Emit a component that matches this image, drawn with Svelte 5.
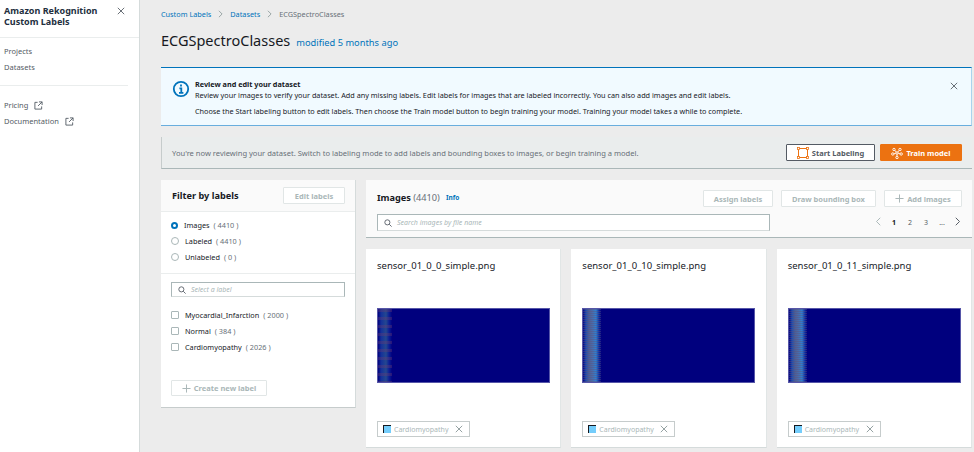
<script>
  const labels = [
    { name: 'Myocardial_Infarction', count: 2000 },
    { name: 'Normal', count: 384 },
    { name: 'Cardiomyopathy', count: 2026 }
  ];
  const filters = [
    { name: 'Images', count: 4410, on: true },
    { name: 'Labeled', count: 4410 },
    { name: 'Unlabeled', count: 0 }
  ];
  const cards = [
    { file: 'sensor_01_0_0_simple.png', hot: 'a' },
    { file: 'sensor_01_0_10_simple.png', hot: 'b' },
    { file: 'sensor_01_0_11_simple.png', hot: 'b' }
  ];
</script>

<div class="page">
  <aside class="nav">
    <div class="nav-head">
      <h2>Amazon Rekognition Custom Labels</h2>
      <svg class="x" viewBox="0 0 10 10"><path d="M1 1l8 8M9 1l-8 8" /></svg>
    </div>
    <ul class="nav-main">
      <li>Projects</li>
      <li>Datasets</li>
    </ul>
    <hr />
    <ul class="nav-links">
      <li>Pricing {@render ext()}</li>
      <li>Documentation {@render ext()}</li>
    </ul>
  </aside>

  <main>
    <div class="crumbs">
      <span class="link">Custom Labels</span>
      {@render chev()}
      <span class="link">Datasets</span>
      {@render chev()}
      <span>ECGSpectroClasses</span>
    </div>
    <div class="title">
      <h1>ECGSpectroClasses</h1>
      <span class="link">modified 5 months ago</span>
    </div>

    <div class="flash">
      <svg class="info" viewBox="0 0 18 18">
        <circle cx="9" cy="9" r="7.2" />
        <path d="M9 4.600v2M7.400 8.400H9.300v4.300M7 12.900h4.400" />
      </svg>
      <div class="flash-text">
        <b>Review and edit your dataset</b>
        <p>Review your images to verify your dataset. Add any missing labels. Edit labels for images that are labeled incorrectly. You can also add images and edit labels.</p>
        <p class="second">Choose the Start labeling button to edit labels. Then choose the Train model button to begin training your model. Training your model takes a while to complete.</p>
      </div>
      <svg class="x flash-x" viewBox="0 0 10 10"><path d="M1 1l8 8M9 1l-8 8" /></svg>
    </div>

    <div class="review">
      <span>You're now reviewing your dataset. Switch to labeling mode to add labels and bounding boxes to images, or begin training a model.</span>
      <div class="review-btns">
        <button class="btn-outline">
          <svg viewBox="0 0 12 12" width="12" height="12">
            <rect x="1.500" y="1.500" width="9" height="9" fill="none" stroke="#ec7211" />
            <g fill="#fff" stroke="#ec7211" stroke-width=".8">
              <rect x=".5" y=".5" width="2" height="2" /><rect x="9.500" y=".5" width="2" height="2" />
              <rect x=".5" y="9.500" width="2" height="2" /><rect x="9.500" y="9.500" width="2" height="2" />
            </g>
          </svg>
          Start Labeling
        </button>
        <button class="btn-primary">
          <svg viewBox="0 0 12 12" width="12" height="12" fill="none" stroke="#fff" stroke-width=".9">
            <circle cx="3" cy="2.500" r="1.200" /><circle cx="9" cy="2.500" r="1.200" />
            <circle cx="6" cy="6" r="1.200" /><circle cx="1.800" cy="7" r="1.200" />
            <circle cx="10.200" cy="7" r="1.200" /><circle cx="6" cy="10.500" r="1.200" />
            <path d="M4 3.400l1.200 1.700M8 3.400L6.800 5.100M3 6.800l1.800-.5M9 6.800l-1.800-.5M6 7.200v2.100" />
          </svg>
          Train model
        </button>
      </div>
    </div>

    <div class="columns">
      <section class="filter">
        <header>
          <h3>Filter by labels</h3>
          <button class="btn-off">Edit labels</button>
        </header>
        <div class="radios">
          {#each filters as f}
            <div class="row">
              <span class="radio" class:on={f.on}></span>
              <span>{f.name}</span><span class="count">( {f.count} )</span>
            </div>
          {/each}
        </div>
        <div class="label-box">
          <div class="search">
            {@render glass()}
            <em>Select a label</em>
          </div>
          <div class="checks">
            {#each labels as l}
              <div class="row">
                <span class="check"></span>
                <span>{l.name}</span><span class="count">( {l.count} )</span>
              </div>
            {/each}
          </div>
          <button class="btn-off create">
            <svg viewBox="0 0 10 10" width="9" height="9"><path d="M5 .5v9M.5 5h9" stroke="#aab7b8" fill="none" stroke-width="1.100" /></svg>
            Create new label
          </button>
        </div>
      </section>

      <section class="images">
        <div class="img-head">
          <div class="img-top">
            <h3>Images <span>(4410)</span></h3>
            <span class="link info-link">Info</span>
            <div class="img-btns">
              <button class="btn-off">Assign labels</button>
              <button class="btn-off">Draw bounding box</button>
              <button class="btn-off add">
                <svg viewBox="0 0 10 10" width="9" height="9"><path d="M5 .5v9M.5 5h9" stroke="#aab7b8" fill="none" stroke-width="1.100" /></svg>
                Add images
              </button>
            </div>
          </div>
          <div class="img-bottom">
            <div class="search wide">
              {@render glass()}
              <em>Search images by file name</em>
            </div>
            <div class="pager">
              <span><svg viewBox="0 0 8 12" width="6" height="9"><path d="M7 1L2 6l5 5" stroke="#aab7b8" fill="none" stroke-width="1.300" /></svg></span>
              <span class="cur">1</span><span>2</span><span>3</span><span>...</span>
              <span><svg viewBox="0 0 8 12" width="6" height="9"><path d="M1 1l5 5-5 5" stroke="#545b64" fill="none" stroke-width="1.300" /></svg></span>
            </div>
          </div>
        </div>

        <div class="grid">
          {#each cards as c}
            <article class="card">
              <div class="fname">{c.file}</div>
              <div class="spectro {c.hot}"></div>
              <div class="tag">
                <span class="swatch"></span>
                <span>Cardiomyopathy</span>
                <svg viewBox="0 0 10 10" width="8" height="8"><path d="M1 1l8 8M9 1l-8 8" stroke="#879596" fill="none" stroke-width="1.100" /></svg>
              </div>
            </article>
          {/each}
        </div>
      </section>
    </div>
  </main>
</div>

{#snippet ext()}
  <svg class="ext" viewBox="0 0 10 10"><path d="M4 1.500H1v7.500h7.500V6M5.500 1H9v3.500M9 1L4.500 5.500" /></svg>
{/snippet}

{#snippet chev()}
  <svg class="chev" viewBox="0 0 6 10"><path d="M1 1l4 4-4 4" /></svg>
{/snippet}

{#snippet glass()}
  <svg class="glass" viewBox="0 0 10 10"><circle cx="4.200" cy="4.200" r="3.200" /><path d="M6.600 6.600L9.500 9.500" /></svg>
{/snippet}

<style>
  :global(body) {
    margin: 0;
    background: #ececec;
    font-family: "Noto Sans", "Open Sans", sans-serif;
    color: #16191f;
    overflow: hidden;
  }

  .page {
    display: flex;
    width: 974px;
    height: 452px;
    overflow: hidden;
  }

  .nav {
    width: 140px;
    box-sizing: border-box;
    flex: none;
    background: #fff;
    border-right: 1px solid #d5dbdb;
    font-size: 7.500px;
    color: #545b64;
  }
  .nav-head {
    display: flex;
    justify-content: space-between;
    padding: 5px 14px 0 4px;
    height: 32px;
    border-bottom: 1px solid #eaeded;
  }
  .nav-head h2 {
    margin: 0;
    font-size: 9px;
    line-height: 11px;
    font-weight: 700;
    color: #232f3e;
    width: 110px;
  }
  .x {
    width: 8px;
    height: 8px;
    margin-top: 2px;
    fill: none;
    stroke: #545b64;
    stroke-width: 1.100;
  }
  .nav ul {
    list-style: none;
    margin: 0;
    padding: 0 4px;
  }
  .nav li {
    height: 16px;
    line-height: 16px;
    display: flex;
    align-items: center;
    gap: 6px;
  }
  .nav-main {
    padding-top: 5px !important;
  }
  .nav hr {
    border: 0;
    border-top: 1px solid #eaeded;
    margin: 10px 11px 0 0;
  }
  .nav-links {
    padding-top: 11px !important;
  }
  .ext {
    width: 9px;
    height: 9px;
    fill: none;
    stroke: #545b64;
    stroke-width: 1;
  }

  main {
    flex: 1;
    padding: 0 2px 0 21px;
    min-width: 0;
  }

  .link {
    color: #0073bb;
  }
  .crumbs {
    display: flex;
    align-items: center;
    gap: 7px;
    height: 27px;
    font-size: 7.300px;
    color: #687078;
  }
  .chev {
    width: 5px;
    height: 8px;
    fill: none;
    stroke: #879596;
    stroke-width: 1;
  }
  .title {
    display: flex;
    align-items: baseline;
    gap: 6px;
    height: 40px;
    font-size: 9.300px;
  }
  .title h1 {
    margin: 0;
    font-size: 14.500px;
    line-height: 26px;
    font-weight: 400;
  }

  .flash {
    display: flex;
    height: 59px;
    box-sizing: border-box;
    background: #f1faff;
    border-top: 1px solid #0073bb;
    border-bottom: 1px solid #69aede;
    border-right: 1px solid #a9d3ee;
    padding: 11px 10px 0 11px;
  }
  .info {
    width: 18px;
    height: 18px;
    flex: none;
    margin: 1px 0 0 0;
    fill: none;
    stroke: #0073bb;
    stroke-width: 1.800;
  }
  .flash-text {
    margin-left: 5px;
    flex: 1;
    font-size: 7.280px;
    line-height: 11px;
  }
  .flash-text b {
    display: block;
  }
  .flash-text p {
    margin: 0;
  }
  .flash-text .second {
    margin-top: 5px;
  }
  .flash-x {
    margin: 3px 3px 0 0;
  }

  .review {
    display: flex;
    align-items: center;
    justify-content: space-between;
    height: 31px;
    margin-top: 11px;
    padding: 0 10px 0 10px;
    background: #eaeded;
    border-left: 1px solid #c6cccc;
    border-bottom: 1px solid #aab7b8;
    font-size: 7.570px;
    color: #687078;
  }
  .review-btns {
    display: flex;
    gap: 5px;
  }
  button {
    font: inherit;
    font-weight: 700;
    font-size: 7.500px;
    display: inline-flex;
    align-items: center;
    justify-content: center;
    gap: 3px;
    padding: 0;
    border-radius: 1px;
  }
  .btn-outline {
    width: 89px;
    height: 17px;
    background: #fff;
    border: 1px solid #545b64;
    color: #545b64;
  }
  .btn-primary {
    width: 82px;
    height: 17px;
    background: #ec7211;
    border: 1px solid #ec7211;
    color: #fff;
  }
  .btn-off {
    background: #fff;
    border: 1px solid #e1e6e6;
    color: #aab7b8;
    height: 17px;
  }

  .columns {
    display: flex;
    gap: 10px;
    margin-top: 11px;
    align-items: flex-start;
  }

  .filter {
    width: 195px;
    box-sizing: border-box;
    flex: none;
    background: #fff;
    border-bottom: 1px solid #c6cccc;
    border-right: 1px solid #d5dbdb;
    font-size: 7.300px;
  }
  .filter header {
    display: flex;
    justify-content: space-between;
    align-items: center;
    height: 31px;
    padding: 0 10px 0 11px;
    background: #fafafa;
    border-bottom: 1px solid #eaeded;
  }
  h3 {
    margin: 0;
    font-size: 9.200px;
    font-weight: 700;
  }
  .filter header .btn-off {
    width: 62px;
  }
  .row {
    display: flex;
    align-items: center;
    height: 16px;
    gap: 0;
  }
  .count {
    margin-left: 4px;
    color: #687078;
  }
  .radios {
    padding: 5px 10px 0;
    box-sizing: border-box;
    border-bottom: 1px solid #eaeded;
    height: 62px;
  }
  .radio {
    width: 6px;
    height: 6px;
    border-radius: 50%;
    border: 1px solid #aab7b8;
    margin-right: 6px;
    background: #fff;
  }
  .radio.on {
    border: 2.500px solid #0073bb;
    width: 3px;
    height: 3px;
  }
  .label-box {
    padding: 8px 10px 11px;
  }
  .search {
    display: flex;
    align-items: center;
    gap: 5px;
    height: 15px;
    box-sizing: border-box;
    background: #fff;
    padding-left: 6px;
    border: 1px solid #aab7b8;
    border-bottom-color: #d5dbdb;
    font-size: 7px;
    color: #aab7b8;
  }
  .glass {
    width: 8px;
    height: 8px;
    flex: none;
    fill: none;
    stroke: #545b64;
    stroke-width: 1.100;
  }
  .checks {
    margin-top: 10px;
  }
  .check {
    width: 6px;
    height: 6px;
    border: 1px solid #aab7b8;
    border-radius: 1px;
    margin-right: 6px;
  }
  .create {
    width: 96px;
    height: 16px;
    margin-top: 25px;
  }

  .images {
    flex: 1;
    min-width: 0;
  }
  .img-head {
    background: #fafafa;
    border-bottom: 1px solid #aab7b8;
    height: 58px;
    padding: 0 6px 0 11px;
    box-sizing: border-box;
  }
  .img-top {
    display: flex;
    align-items: center;
    height: 34px;
  }
  .img-top h3 {
    font-size: 9.200px;
  }
  .img-top h3 span {
    font-weight: 400;
    color: #687078;
  }
  .info-link {
    font-size: 6.500px;
    font-weight: 700;
    margin-left: 6px;
  }
  .img-btns {
    margin-left: auto;
    margin-right: 4px;
    display: flex;
    gap: 8px;
    padding-top: 3px;
  }
  .img-btns button:nth-child(1) {
    width: 70px;
  }
  .img-btns button:nth-child(2) {
    width: 95px;
  }
  .add {
    width: 78px;
  }
  .img-bottom {
    display: flex;
    align-items: center;
    justify-content: space-between;
  }
  .wide {
    width: 393px;
    height: 17px;
  }
  .pager {
    display: flex;
    align-items: center;
    font-size: 7px;
    color: #545b64;
  }
  .pager span {
    width: 16px;
    text-align: center;
  }
  .pager .cur {
    color: #16191f;
    font-weight: 700;
  }

  .grid {
    display: flex;
    gap: 10px;
    margin-top: 11px;
  }
  .card {
    flex: 1;
    min-width: 0;
    height: 199px;
    background: #fff;
    border-bottom: 1px solid #d5dbdb;
    border-right: 1px solid #e1e6e6;
    padding: 11px 11px 0;
    box-sizing: border-box;
  }
  .fname {
    font-size: 9.500px;
    line-height: 11px;
  }
  .spectro {
    margin-top: 37px;
    height: 75px;
    width: 173px;
    box-sizing: border-box;
    border: 1px solid #5656a8;
    background-color: #00007e;
    background-repeat: no-repeat;
  }
  .spectro.a {
    background-size: 14px 100%;
    background-image:
      repeating-linear-gradient(180deg, rgba(110, 60, 110, 0.35) 0 3px, transparent 3px 8px),
      linear-gradient(90deg, #00007e 0, #14309a 3px, #24478f 8px, #0c1f96 11px, #00007e 14px);
  }
  .spectro.b {
    background-size: 18px 100%;
    background-image:
      repeating-linear-gradient(180deg, rgba(95, 80, 120, 0.4) 0 1px, transparent 1px 2px),
      linear-gradient(90deg, #00007e 0, #1c4cb0 3px, #4a5f98 6px, #4a6aa8 9px, #2f7fd0 13px, #0c2aa0 16px, #00007e 18px);
  }
  .tag {
    display: flex;
    align-items: center;
    gap: 3px;
    width: 93px;
    height: 16px;
    box-sizing: border-box;
    margin-top: 38px;
    padding: 0 6px 0 5px;
    background: #fff;
    border: 1px solid #c6cccc;
    font-size: 7px;
    color: #aab7b8;
  }
  .tag svg {
    margin-left: auto;
  }
  .swatch {
    width: 7px;
    height: 7px;
    background: #74cdfb;
    border: 1px solid #16191f;
    border-width: 1px 0 0 1px;
    flex: none;
  }
</style>
